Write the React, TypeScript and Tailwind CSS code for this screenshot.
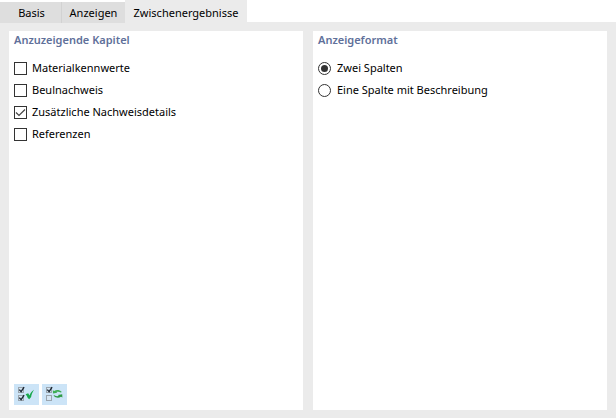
import React, { useState } from 'react';

const TABS = [
  { id: 'basis', label: 'Basis', width: 'w-[62px] border-r border-[#d2d2d2] pl-0.5' },
  { id: 'anzeigen', label: 'Anzeigen', width: 'w-[63px]' },
  { id: 'zwischenergebnisse', label: 'Zwischenergebnisse', width: 'w-[122px]' },
];

const CHAPTERS = [
  { id: 'material', label: 'Materialkennwerte' },
  { id: 'beul', label: 'Beulnachweis' },
  { id: 'details', label: 'Zusätzliche Nachweisdetails' },
  { id: 'referenzen', label: 'Referenzen' },
];

const FORMATS = [
  { id: 'two', label: 'Zwei Spalten' },
  { id: 'one', label: 'Eine Spalte mit Beschreibung' },
];

const SmallTick: React.FC<{ y: number }> = ({ y }) => (
  <path d={`M5.3 ${y + 2.6}l1.8 2l3-4.4`} fill="none" stroke="#1c2733" strokeWidth="1.4" />
);

const SmallBox: React.FC<{ y: number }> = ({ y }) => (
  <rect x="4.5" y={y + 0.5} width="5" height="5" fill="#d6e6f3" stroke="#9ba5ae" />
);

const SelectAllIcon: React.FC = () => (
  <svg width="25" height="21" viewBox="0 0 25 21" aria-hidden="true">
    <SmallBox y={3} />
    <SmallTick y={3} />
    <SmallBox y={11} />
    <SmallTick y={11} />
    <path d="M11.6 10.2l2.6-1l1.3 2.2c.9-2.4 2.2-4.2 4.5-5.6c-1.7 2.6-2.5 5-2.9 7.2l-1.9 2.2l-1.4-1.2c-.5-1.6-1.2-2.8-2.2-3.8z" fill="#17a84b" />
  </svg>
);

const InvertIcon: React.FC = () => (
  <svg width="25" height="21" viewBox="0 0 25 21" aria-hidden="true">
    <SmallBox y={3} />
    <SmallTick y={3} />
    <SmallBox y={11} />
    <path d="M10.8 6.2l1.4.8c2.4-1.4 5.2-1.2 7.6 1l-1 .6c-1.6-1-3-1.2-4.4-.6l1 .8l-4.4.8z" fill="#3fae54" />
    <path d="M20.4 13.6l-1.4-.8c-2.4 1.4-5.2 1.2-7.6-1l1-.6c1.6 1 3 1.2 4.4.6l-1-.8l4.4-.8z" fill="#2f9a44" />
  </svg>
);

const Panel: React.FC<{ title: string; children: React.ReactNode }> = ({ title, children }) => (
  <section className="flex flex-1 flex-col bg-white px-[5px] pb-[5px]">
    <h2 className="font-semibold leading-[18px] text-[#60709a]">{title}</h2>
    {children}
  </section>
);

export default function App() {
  const [tab, setTab] = useState('zwischenergebnisse');
  const [chapters, setChapters] = useState<string[]>(['details']);
  const [format, setFormat] = useState('two');

  const toggle = (id: string) =>
    setChapters((prev) => (prev.includes(id) ? prev.filter((c) => c !== id) : [...prev, id]));

  const selectAll = () => setChapters(CHAPTERS.map((c) => c.id));

  const invert = () =>
    setChapters((prev) => CHAPTERS.map((c) => c.id).filter((id) => !prev.includes(id)));

  return (
    <div className="flex min-h-screen flex-col bg-[#ebebeb] font-['Noto_Sans',sans-serif] text-[11px] text-black">
      {/* Tab bar */}
      <div role="tablist" className="flex h-[22px] items-start bg-white">
        {TABS.map(({ id, label, width }) => (
          <button
            key={id}
            type="button"
            role="tab"
            aria-selected={tab === id}
            onClick={() => setTab(id)}
            className={`${width} text-center whitespace-nowrap ${
              tab === id ? 'h-[22px] bg-[#ebebeb] pt-1' : 'mt-0.5 h-[21px] bg-[#dedede] pt-px'
            }`}
          >
            {label}
          </button>
        ))}
      </div>

      <main className="flex flex-1 gap-2.5 px-[9px] pt-[9px] pb-2">
        <Panel title="Anzuzeigende Kapitel">
          <div className="flex flex-1 flex-col pt-2">
            {CHAPTERS.map(({ id, label }) => (
              <label key={id} className="flex h-[22px] items-center gap-[5px]">
                <span className="grid">
                  <input
                    type="checkbox"
                    checked={chapters.includes(id)}
                    onChange={() => toggle(id)}
                    className="peer col-start-1 row-start-1 size-[13px] appearance-none border border-[#333] bg-white"
                  />
                  <svg
                    viewBox="0 0 13 13"
                    className="pointer-events-none invisible col-start-1 row-start-1 size-[13px] peer-checked:visible"
                    aria-hidden="true"
                  >
                    <path d="M2 6.5l3 3l6-6" fill="none" stroke="#444" strokeWidth="1.2" />
                  </svg>
                </span>
                {label}
              </label>
            ))}
          </div>
          <div className="flex gap-[3px]">
            <button type="button" title="Alle auswählen" onClick={selectAll} className="bg-[#cce4f7]">
              <SelectAllIcon />
            </button>
            <button type="button" title="Auswahl umkehren" onClick={invert} className="bg-[#cce4f7]">
              <InvertIcon />
            </button>
          </div>
        </Panel>

        <Panel title="Anzeigeformat">
          <div className="flex flex-col pt-2">
            {FORMATS.map(({ id, label }) => (
              <label key={id} className="flex h-[22px] items-center gap-1.5">
                <input
                  type="radio"
                  name="format"
                  checked={format === id}
                  onChange={() => setFormat(id)}
                  className="grid size-[13px] appearance-none place-items-center rounded-full border border-[#333] bg-white before:size-[7px] before:rounded-full checked:before:bg-[#333]"
                />
                {label}
              </label>
            ))}
          </div>
        </Panel>
      </main>
    </div>
  );
}
